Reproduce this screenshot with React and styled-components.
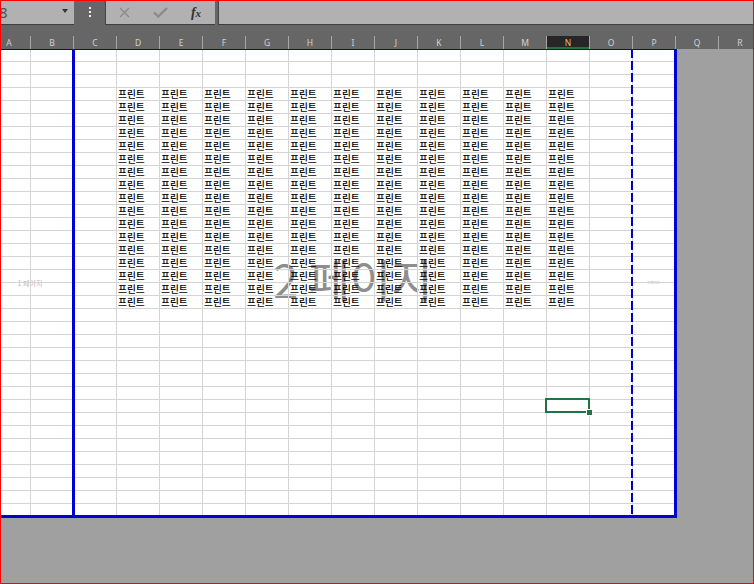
import React from 'react'
import styled, { createGlobalStyle } from 'styled-components'

const GlobalStyle = createGlobalStyle`
  html, body {
    margin: 0;
    padding: 0;
    background: #ffffff;
  }
  body {
    font-family: "Noto Sans", "Noto Sans CJK KR", sans-serif;
  }
`

const COLUMNS = 'ABCDEFGHIJKLMNOPQR'.split('')
const PRINT_COLS = 16
const PRINT_ROWS = 36
const SELECTED = { col: 13, row: 27 } // N28
const TEXT_COLS = [3, 13] // D..N
const TEXT_ROWS = [3, 19] // 4..20

const Window = styled.div`
  width: 754px;
  height: 584px;
  box-sizing: border-box;
  border: 1px solid #ff0000;
  background: #a0a0a0;
  overflow: hidden;
  display: flex;
  flex-direction: column;
`

const Toolbar = styled.div`
  flex: none;
  height: 35px;
  display: flex;
  align-items: flex-start;
  background: #666666;
`

const NameBox = styled.div`
  flex: none;
  width: 73px;
  height: 24px;
  box-sizing: border-box;
  background: #b1b1b1;
  border-bottom: 1px solid #3e3e3e;
  display: flex;
  align-items: center;
  justify-content: space-between;
  padding-right: 6px;
  overflow: hidden;
`

const NameText = styled.span`
  margin-left: -2px;
  font-family: "Noto Sans", sans-serif;
  font-size: 15px;
  line-height: 1;
  color: #505050;
`

const Caret = styled.span`
  width: 0;
  height: 0;
  margin-bottom: 3px;
  border-left: 3.5px solid transparent;
  border-right: 3.5px solid transparent;
  border-top: 4px solid #333333;
`

const MoreButton = styled.div`
  flex: none;
  width: 31px;
  height: 24px;
  display: flex;
  justify-content: center;
  padding-top: 6px;
  box-sizing: border-box;
`

const Dots = styled.span`
  width: 2px;
  height: 2px;
  background: #f2f2f2;
  box-shadow: 0 4px 0 #f2f2f2, 0 8px 0 #f2f2f2;
`

const FormulaTools = styled.div`
  flex: none;
  height: 24px;
  box-sizing: border-box;
  display: flex;
  align-items: center;
  padding-right: 1px;
  background: #b1b1b1;
  border-left: 1px solid #454545;
  border-bottom: 1px solid #3e3e3e;
`

const ToolSlot = styled.span`
  width: 36px;
  display: flex;
  align-items: center;
  justify-content: center;
`

const FxLabel = styled.span`
  font-family: "Liberation Serif", "DejaVu Serif", serif;
  font-style: italic;
  font-weight: bold;
  font-size: 14px;
  line-height: 1;
  color: #333333;

  small {
    font-size: 11px;
  }
`

const FormulaInput = styled.div`
  flex: 1;
  height: 24px;
  margin-left: 3px;
  box-sizing: border-box;
  background: #b1b1b1;
  border-left: 1px solid #454545;
  border-bottom: 1px solid #3e3e3e;
`

const HeaderRow = styled.div`
  flex: none;
  height: 13px;
  display: flex;
  margin-left: -13px;
  background: #666666;
`

const ColHead = styled.div`
  flex: none;
  width: 43px;
  box-sizing: border-box;
  border-right: 1px solid #a6a6a6;
  text-align: center;
  font-family: "Noto Sans", sans-serif;
  font-size: 8.5px;
  line-height: 13px;
  color: ${(p) => (p.$active ? '#e2bf6a' : '#d2d2d2')};
  background: ${(p) => (p.$active ? '#262626' : 'transparent')};
  box-shadow: ${(p) => (p.$active ? 'inset 0 -2px 0 #217346' : 'none')};
`

const SheetArea = styled.div`
  flex: 1;
  overflow: hidden;
`

const PrintArea = styled.div`
  position: relative;
  z-index: 0;
  margin-left: -13px;
  width: ${PRINT_COLS * 43}px;
  display: grid;
  grid-template-columns: repeat(${PRINT_COLS}, 43px);
  grid-auto-rows: 13px;
  background: #ffffff;
`

const Cell = styled.div`
  position: relative;
  box-sizing: border-box;
  border-right: 1px solid #d4d4d4;
  border-bottom: 1px solid #d4d4d4;
  padding-left: 1px;
  font-family: "Noto Sans CJK KR", "Noto Sans", sans-serif;
  font-size: 9.7px;
  font-weight: 500;
  line-height: 12px;
  color: #000000;
  white-space: nowrap;
`

const Selection = styled.span`
  position: absolute;
  top: -2px;
  left: -2px;
  right: -1px;
  bottom: -1px;
  border: 2px solid #217346;
  z-index: 3;
`

const FillHandle = styled.span`
  position: absolute;
  right: -5px;
  bottom: -5px;
  width: 5px;
  height: 5px;
  background: #217346;
  border: 1px solid #ffffff;
`

const PageFrame = styled.div`
  position: absolute;
  top: -2px;
  left: -20px;
  right: -1px;
  bottom: -1px;
  border: 3px solid #0000d4;
  z-index: 2;
  pointer-events: none;
`

const PageBreak = styled.div`
  position: absolute;
  top: 0;
  bottom: 0;
  left: ${(p) => p.$left}px;
  width: ${(p) => (p.$dashed ? 2 : 3)}px;
  background: ${(p) =>
    p.$dashed
      ? 'repeating-linear-gradient(to bottom, #0000d4 0 9px, transparent 9px 12px)'
      : '#0000d4'};
  z-index: 2;
`

const PageLabel = styled.div`
  position: absolute;
  top: 0;
  bottom: 0;
  left: ${(p) => p.$left}px;
  width: ${(p) => p.$width}px;
  display: flex;
  align-items: center;
  justify-content: center;
  padding-bottom: ${(p) => p.$lift || 0}px;
  box-sizing: border-box;
  z-index: -1;
  font-family: "Noto Sans CJK KR", "Noto Sans", sans-serif;
  font-size: ${(p) => p.$size}px;
  line-height: 1;
  white-space: nowrap;
  color: ${(p) => p.$color};
`

const CloseIcon = () => (
  <svg width="11" height="11" viewBox="0 0 11 11">
    <path d="M1 1 L10 10 M10 1 L1 10" stroke="#8a8a8a" strokeWidth="1.4" fill="none" />
  </svg>
)

const CheckIcon = () => (
  <svg width="15" height="11" viewBox="0 0 15 11">
    <path d="M1 5.5 L5.2 9.5 L14 1" stroke="#8a8a8a" strokeWidth="2.3" fill="none" />
  </svg>
)

const hasText = (r, c) =>
  r >= TEXT_ROWS[0] && r <= TEXT_ROWS[1] && c >= TEXT_COLS[0] && c <= TEXT_COLS[1]

export default function App() {
  const cells = []
  for (let r = 0; r < PRINT_ROWS; r++) {
    for (let c = 0; c < PRINT_COLS; c++) {
      const selected = r === SELECTED.row && c === SELECTED.col
      cells.push(
        <Cell key={`${r}-${c}`}>
          {hasText(r, c) ? '프린트' : null}
          {selected && (
            <Selection>
              <FillHandle />
            </Selection>
          )}
        </Cell>
      )
    }
  }

  return (
    <>
      <GlobalStyle />
      <Window>
        <Toolbar>
          <NameBox>
            <NameText>8</NameText>
            <Caret />
          </NameBox>
          <MoreButton>
            <Dots />
          </MoreButton>
          <FormulaTools>
            <ToolSlot>
              <CloseIcon />
            </ToolSlot>
            <ToolSlot>
              <CheckIcon />
            </ToolSlot>
            <ToolSlot>
              <FxLabel>
                f<small>x</small>
              </FxLabel>
            </ToolSlot>
          </FormulaTools>
          <FormulaInput />
        </Toolbar>

        <HeaderRow>
          {COLUMNS.map((col, i) => (
            <ColHead key={col} $active={i === SELECTED.col}>
              {col}
            </ColHead>
          ))}
        </HeaderRow>

        <SheetArea>
          <PrintArea>
            {cells}
            <PageLabel $left={0} $width={84} $size={7} $color="#c2b3ba">
              1 페이지
            </PageLabel>
            <PageLabel $left={87} $width={556} $size={45} $lift={10} $color="#8e8e8e">
              2 페이지
            </PageLabel>
            <PageLabel $left={645} $width={41} $size={3.5} $color="#b0a8ac">
              3 페이지
            </PageLabel>
            <PageBreak $left={84} />
            <PageBreak $left={643} $dashed />
            <PageFrame />
          </PrintArea>
        </SheetArea>
      </Window>
    </>
  )
}
